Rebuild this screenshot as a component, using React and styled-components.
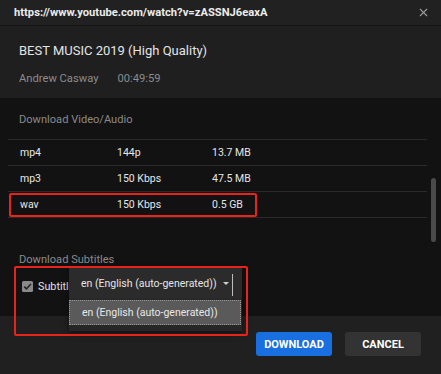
import styled, { createGlobalStyle } from "styled-components";
import { X } from "lucide-react";

const GlobalStyle = createGlobalStyle`
  html, body {
    margin: 0;
    padding: 0;
    background: #121212;
  }
  body {
    font-family: Roboto, "Noto Sans", "Liberation Sans", sans-serif;
  }
`;

const formats = [
	{ type: "mp4", quality: "144p", size: "13.7 MB" },
	{ type: "mp3", quality: "150 Kbps", size: "47.5 MB" },
	{ type: "wav", quality: "150 Kbps", size: "0.5 GB", marked: true },
];

export default function App() {
	return (
		<>
			<GlobalStyle />
			<Dialog>
				<Header>
					<Url>https://www.youtube.com/watch?v=zASSNJ6eaxA</Url>
					<CloseButton>
						<X size={13} strokeWidth={2} />
					</CloseButton>
				</Header>

				<Info>
					<Title>BEST MUSIC 2019 (High Quality)</Title>
					<Meta>
						<span>Andrew Casway</span>
						<span>00:49:59</span>
					</Meta>
				</Info>

				<Body>
					<SectionTitle>Download Video/Audio</SectionTitle>
					<Table>
						{formats.map((f) => (
							<Row key={f.type} $marked={f.marked}>
								<Cell $width={97}>{f.type}</Cell>
								<Cell $width={95}>{f.quality}</Cell>
								<Cell>{f.size}</Cell>
							</Row>
						))}
					</Table>

					<SectionTitle $top={35}>Download Subtitles</SectionTitle>
					<SubtitleRow>
						<Checkbox>
							<svg width="11" height="11" viewBox="0 0 11 11">
								<rect x="0" y="0" width="11" height="11" rx="1.5" fill="#8a8a8a" />
								<path d="M2.2 5.6 L4.5 7.9 L8.9 3" fill="none" stroke="#262626" strokeWidth="1.6" />
							</svg>
							<CheckLabel>Subtitle</CheckLabel>
						</Checkbox>
						<SelectMenu>
							<SelectValue>
								en (English (auto-generated))
								<Caret />
							</SelectValue>
							<OptionList>
								<Option>en (English (auto-generated))</Option>
							</OptionList>
						</SelectMenu>
						<Highlight />
					</SubtitleRow>

					<Scrollbar />
				</Body>

				<Footer>
					<Button $primary>DOWNLOAD</Button>
					<Button>CANCEL</Button>
				</Footer>
			</Dialog>
		</>
	);
}

const Dialog = styled.div`
  width: 441px;
  height: 374px;
  display: flex;
  flex-direction: column;
  background: #121212;
  overflow: hidden;
`;

const Header = styled.div`
  height: 25px;
  flex-shrink: 0;
  display: flex;
  align-items: center;
  justify-content: space-between;
  padding: 0 11px 0 14px;
  background: #212121;
  border-bottom: 1px solid #151515;
`;

const Url = styled.div`
  font-size: 11.2px;
  font-weight: 700;
  color: #ececec;
`;

const CloseButton = styled.div`
  display: flex;
  color: #9a9a9a;
`;

const Info = styled.div`
  height: 72px;
  flex-shrink: 0;
  padding: 17px 19px 0;
  box-sizing: border-box;
  background: #1f1f1f;
`;

const Title = styled.div`
  font-size: 13px;
  color: #e4e4e4;
  line-height: 16px;
`;

const Meta = styled.div`
  margin-top: 13px;
  display: flex;
  gap: 19px;
  font-size: 11.2px;
  color: #8c8c8c;
`;

const Body = styled.div`
  flex: 1;
  position: relative;
  padding: 15px 14px 0 8px;
  background: #121212;
`;

const SectionTitle = styled.div`
  margin-top: ${(p) => p.$top || 0}px;
  padding-left: 11px;
  font-size: 11.1px;
  line-height: 14px;
  color: #8a8a8a;
`;

const Table = styled.div`
  margin-top: 12px;
  border-top: 1px solid #2a2a2a;
`;

const Row = styled.div`
  position: relative;
  height: 25px;
  display: flex;
  align-items: center;
  padding-left: 12px;
  border-bottom: 1px solid #2a2a2a;
  font-size: 10.5px;
  color: #e6e6e6;

  ${(p) =>
		p.$marked &&
		`
    &::after {
      content: "";
      position: absolute;
      left: 1px;
      top: 1px;
      width: 248px;
      height: 24px;
      box-sizing: border-box;
      border: 2px solid #e8231c;
      border-radius: 2px;
    }
  `}
`;

const Cell = styled.div`
  width: ${(p) => (p.$width ? `${p.$width}px` : "auto")};
`;

const SubtitleRow = styled.div`
  position: relative;
  height: 40px;
`;

const Checkbox = styled.label`
  display: flex;
  align-items: center;
  gap: 5px;
  padding: 13px 0 0 14px;

  svg {
    flex-shrink: 0;
  }
`;

const CheckLabel = styled.span`
  font-size: 10.8px;
  color: #e2e2e2;
`;

const SelectMenu = styled.div`
  position: absolute;
  left: 61px;
  top: 0;
  width: 173px;
  height: 64px;
  background: #262626;
  box-shadow: 0 2px 6px rgba(0, 0, 0, 0.5);
  z-index: 2;
`;

const SelectValue = styled.div`
  position: relative;
  height: 32px;
  display: flex;
  align-items: center;
  padding-left: 12px;
  background: #2b2b2b;
  font-size: 10.5px;
  color: #e6e6e6;
`;

const Caret = styled.span`
  position: absolute;
  left: 154px;
  top: 15px;
  width: 0;
  height: 0;
  border-left: 3px solid transparent;
  border-right: 3px solid transparent;
  border-top: 3px solid #cfcfcf;

  &::after {
    content: "";
    position: absolute;
    left: 6px;
    top: -11px;
    width: 1px;
    height: 22px;
    background: #bdbdbd;
  }
`;

const OptionList = styled.div`
  padding: 1px 1px 0 0;
`;

const Option = styled.div`
  height: 25px;
  box-sizing: border-box;
  display: flex;
  align-items: center;
  padding-left: 12px;
  background: #5a5a5a;
  border: 1px dotted #9a9a9a;
  font-size: 10.5px;
  color: #e8e8e8;
`;

const Highlight = styled.div`
  position: absolute;
  left: 6px;
  top: -1px;
  width: 234px;
  height: 70px;
  box-sizing: border-box;
  border: 2px solid #e8231c;
  border-radius: 2px;
  z-index: 3;
`;

const Scrollbar = styled.div`
  position: absolute;
  right: 5px;
  top: 80px;
  width: 5px;
  height: 64px;
  border-radius: 3px;
  background: #4a4a4a;
`;

const Footer = styled.div`
  height: 58px;
  flex-shrink: 0;
  display: flex;
  justify-content: flex-end;
  align-items: flex-start;
  gap: 13px;
  padding: 16px 20px 0 0;
  box-sizing: border-box;
  background: #202020;
`;

const Button = styled.div`
  width: 76px;
  height: 24px;
  display: flex;
  align-items: center;
  justify-content: center;
  border-radius: 3px;
  font-size: 11px;
  font-weight: 700;
  color: #ffffff;
  background: ${(p) => (p.$primary ? "#1a6fe0" : "#333333")};
`;
